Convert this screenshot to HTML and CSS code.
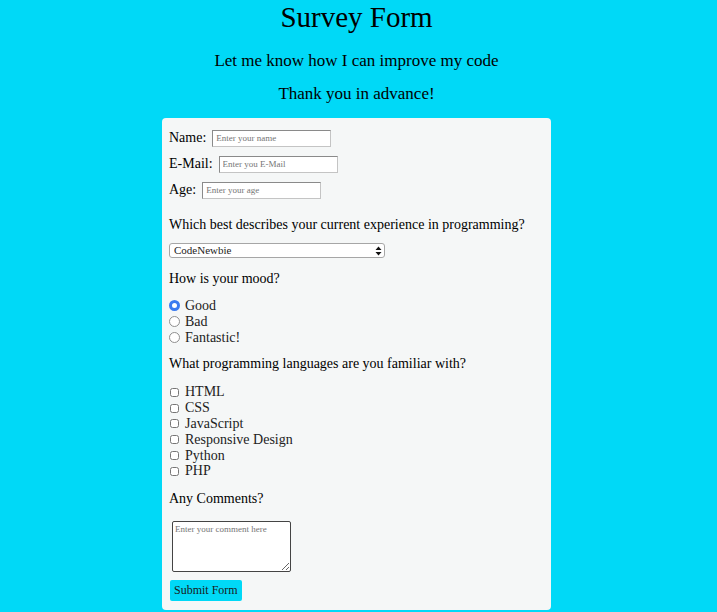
FILE: index.html
```html
<!DOCTYPE html>
<html lang="en">
<head>
<meta charset="utf-8">
<title>Survey Form</title>
<link rel="stylesheet" href="styles.css">
</head>
<body>
<header class="intro">
  <h1 class="title">Survey Form</h1>
  <p class="subtitle first">Let me know how I can improve my code</p>
  <p class="subtitle">Thank you in advance!</p>
</header>
<form class="survey">
  <div class="field"><label class="lbl">Name:</label><input class="txt" type="text" placeholder="Enter your name"></div>
  <div class="field"><label class="lbl">E-Mail:</label><input class="txt" type="email" placeholder="Enter you E-Mail"></div>
  <div class="field"><label class="lbl">Age:</label><input class="txt" type="number" placeholder="Enter your age"></div>

  <p class="question q-exp">Which best describes your current experience in programming?</p>
  <div class="sel-wrap">
    <select class="sel">
      <option>CodeNewbie</option>
      <option>Junior</option>
      <option>Senior</option>
    </select>
    <svg class="sel-arrows" width="7" height="10" viewBox="0 0 7 10"><path d="M3.5 0.5 L6.5 4 L0.5 4 Z M0.5 6 L6.5 6 L3.5 9.5 Z" fill="#111"/></svg>
  </div>

  <p class="question q-mood">How is your mood?</p>
  <div class="options radios">
    <label class="opt"><input class="radio" type="radio" name="mood" checked> Good</label>
    <label class="opt"><input class="radio" type="radio" name="mood"> Bad</label>
    <label class="opt"><input class="radio" type="radio" name="mood"> Fantastic!</label>
  </div>

  <p class="question q-lang">What programming languages are you familiar with?</p>
  <div class="options checks">
    <label class="opt"><input type="checkbox"> HTML</label>
    <label class="opt"><input type="checkbox"> CSS</label>
    <label class="opt"><input type="checkbox"> JavaScript</label>
    <label class="opt"><input type="checkbox"> Responsive Design</label>
    <label class="opt"><input type="checkbox"> Python</label>
    <label class="opt"><input type="checkbox"> PHP</label>
  </div>

  <p class="question q-comm">Any Comments?</p>
  <textarea class="comment" placeholder="Enter your comment here"></textarea>
  <button class="submit" type="submit">Submit Form</button>
</form>
</body>
</html>
```
FILE: styles.css
```css
html, body {
  margin: 0;
  padding: 0;
}
body {
  background: #00d9f7;
  font-family: "Liberation Serif", "Times New Roman", serif;
  color: #000;
  min-height: 612px;
  padding-right: 4px;
}
.intro {
  text-align: center;
}
.title {
  margin: 0;
  font-size: 29px;
  font-weight: normal;
  line-height: 34px;
}
.subtitle {
  margin: 13px 0 0;
  font-size: 17px;
  line-height: 20px;
}
.subtitle.first {
  margin-top: 17px;
}
.survey {
  width: 389px;
  box-sizing: border-box;
  margin: 14px auto 0;
  background: #f5f7f7;
  border-radius: 4px;
  padding: 11px 7px 9px 7px;
  display: flex;
  flex-direction: column;
  align-items: flex-start;
  font-size: 14px;
}
.field {
  display: flex;
  align-items: center;
  gap: 6px;
  height: 18px;
  margin-bottom: 8px;
}
.lbl {
  font-size: 14px;
}
.txt {
  width: 119px;
  height: 17px;
  box-sizing: border-box;
  font-family: inherit;
  font-size: 9px;
  padding: 1px 3px;
  border: 1px solid #c4c4c4;
  border-top-color: #8a8a8a;
  border-left-color: #8a8a8a;
  background: #fff;
  margin: 0;
}
.question {
  margin: 0;
  font-size: 14px;
  line-height: 18px;
}
.q-exp { margin-top: 9px; }
.sel-wrap {
  position: relative;
  margin-top: 9px;
  width: 216px;
  height: 15px;
}
.sel {
  appearance: none;
  -webkit-appearance: none;
  display: block;
  width: 216px;
  height: 15px;
  margin: 0;
  font-family: inherit;
  font-size: 11px;
  line-height: 13px;
  padding: 0 4px;
  border: 1px solid #a6a6a6;
  border-radius: 3px;
  background: #fff;
  color: #222;
}
.sel-arrows {
  position: absolute;
  right: 3px;
  top: 2.5px;
  pointer-events: none;
}
.q-mood { margin-top: 12px; }
.q-lang { margin-top: 10px; }
.q-comm { margin-top: 11px; }
.options {
  display: flex;
  flex-direction: column;
  margin-top: 10px;
}
.checks {
  margin-top: 11px;
}
.opt {
  display: flex;
  align-items: center;
  font-size: 14px;
  line-height: 15.8px;
  height: 15.8px;
  color: #222;
}
.radios .opt {
  gap: 5px;
}
.radio {
  appearance: none;
  -webkit-appearance: none;
  width: 11px;
  height: 11px;
  margin: 0;
  box-sizing: border-box;
  border: 1px solid #8f8f8f;
  border-radius: 50%;
  background: #fff;
}
.radio:checked {
  border: 3.5px solid #3b7bf0;
  background: #fff;
}
.checks .opt {
  gap: 4px;
}
.checks input {
  width: 9px;
  height: 9px;
  margin: 0 2px 0 1px;
}
.comment {
  margin: 13px 0 0 3px;
  width: 119px;
  height: 51px;
  box-sizing: border-box;
  font-family: inherit;
  font-size: 9px;
  padding: 2px;
  border: 1px solid #444;
  border-radius: 2px;
  background: #fff;
  resize: vertical;
}
.submit {
  margin: 8px 0 0 1px;
  background: #00d9f7;
  border: none;
  border-radius: 2px;
  padding: 0 4px;
  height: 21px;
  font-family: inherit;
  font-size: 12px;
  color: #1a1a1a;
  cursor: pointer;
}
```
